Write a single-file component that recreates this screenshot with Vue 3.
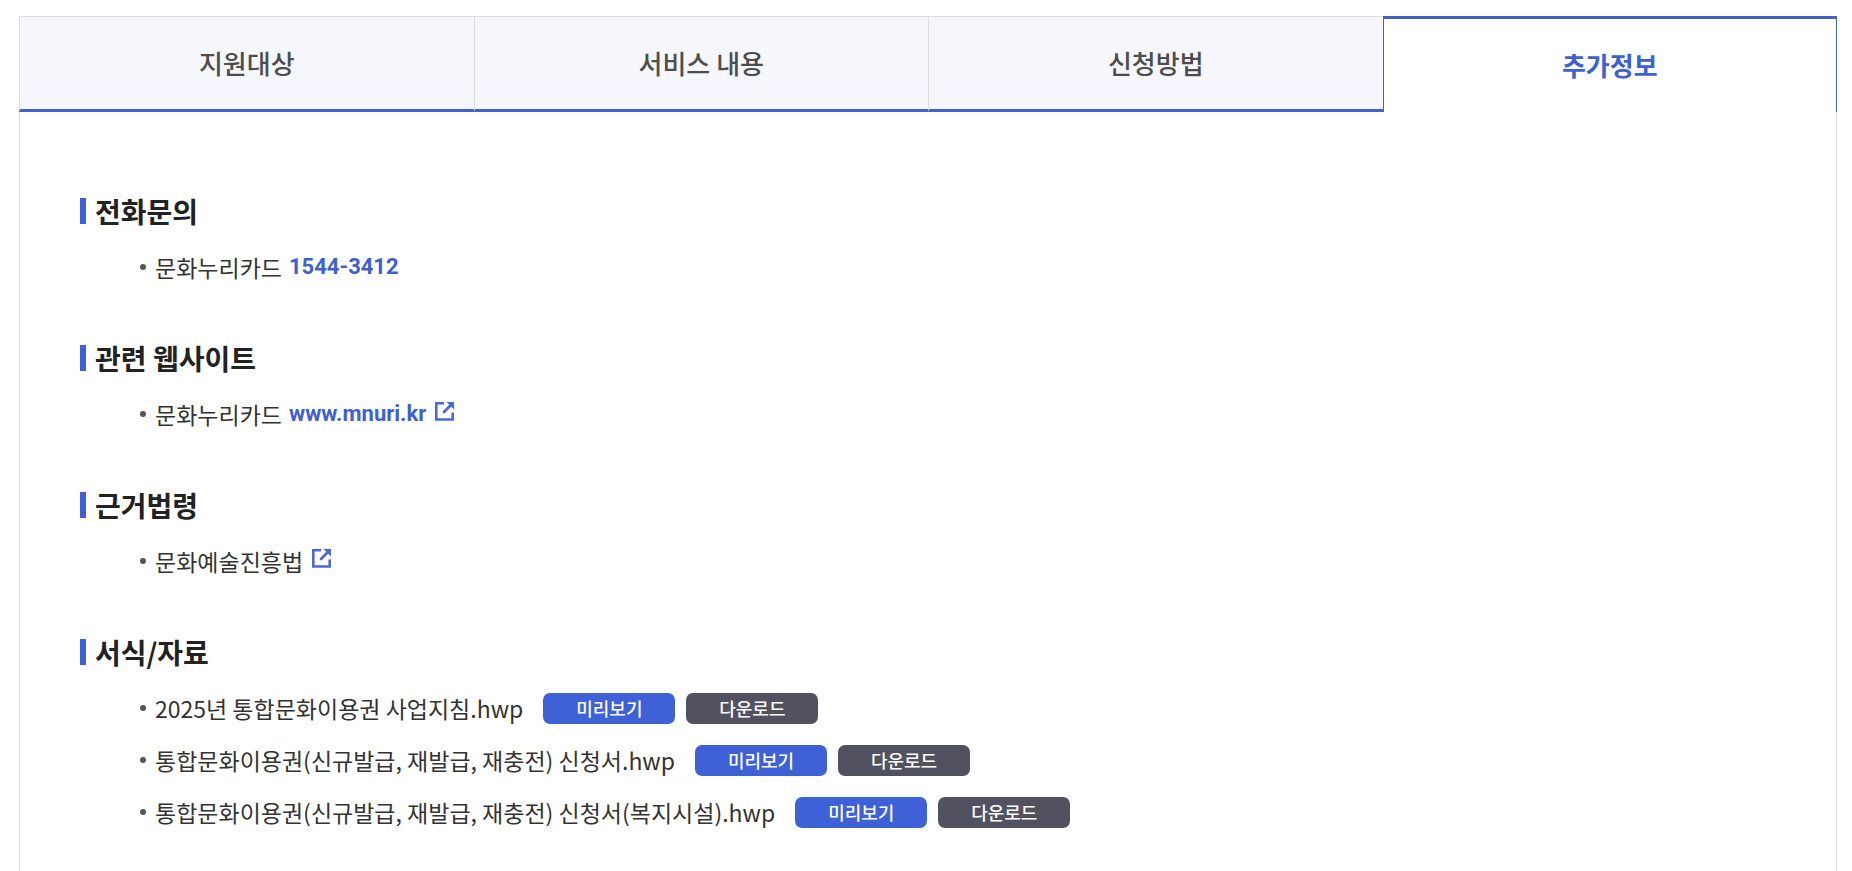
<script setup>
import { ref } from 'vue'

const tabs = ['지원대상', '서비스 내용', '신청방법', '추가정보']
const current = ref(3)

const files = [
  '2025년 통합문화이용권 사업지침.hwp',
  '통합문화이용권(신규발급, 재발급, 재충전) 신청서.hwp',
  '통합문화이용권(신규발급, 재발급, 재충전) 신청서(복지시설).hwp'
]
</script>

<template>
  <main class="page">
    <div class="tabs" role="tablist">
      <button
        v-for="(tab, i) in tabs"
        :key="tab"
        type="button"
        role="tab"
        class="tab"
        :class="{ active: i === current }"
        :aria-selected="i === current"
        @click="current = i"
      >{{ tab }}</button>
    </div>

    <div class="panel" role="tabpanel">
      <section class="block">
        <h2 class="title">전화문의</h2>
        <ul class="list">
          <li class="item">
            <span>문화누리카드</span>
            <a class="link" href="tel:1544-3412">1544-3412</a>
          </li>
        </ul>
      </section>

      <section class="block">
        <h2 class="title">관련 웹사이트</h2>
        <ul class="list">
          <li class="item">
            <span>문화누리카드</span>
            <a class="link" href="#website">
              www.mnuri.kr
              <svg class="icon" viewBox="0 0 19 19" aria-hidden="true">
                <path d="M9 1.200H1.300V17.500H17.700V10.500" fill="none" stroke="currentColor" stroke-width="2.600" />
                <path d="M9 10L15.500 3.500" fill="none" stroke="currentColor" stroke-width="2.800" stroke-linecap="round" />
                <path d="M11.500 0H19V7.500Z" fill="currentColor" />
              </svg>
            </a>
          </li>
        </ul>
      </section>

      <section class="block">
        <h2 class="title">근거법령</h2>
        <ul class="list">
          <li class="item">
            <a class="law" href="#law">
              문화예술진흥법
              <svg class="icon" viewBox="0 0 19 19" aria-hidden="true">
                <path d="M9 1.200H1.300V17.500H17.700V10.500" fill="none" stroke="currentColor" stroke-width="2.600" />
                <path d="M9 10L15.500 3.500" fill="none" stroke="currentColor" stroke-width="2.800" stroke-linecap="round" />
                <path d="M11.500 0H19V7.500Z" fill="currentColor" />
              </svg>
            </a>
          </li>
        </ul>
      </section>

      <section class="block">
        <h2 class="title">서식/자료</h2>
        <ul class="list">
          <li v-for="file in files" :key="file" class="item">
            <span>{{ file }}</span>
            <span class="actions">
              <button type="button" class="btn preview">미리보기</button>
              <button type="button" class="btn download">다운로드</button>
            </span>
          </li>
        </ul>
      </section>
    </div>
  </main>
</template>

<style>
body {
  margin: 0;
  background: #fff;
}
</style>

<style scoped>
.page {
  box-sizing: border-box;
  display: flex;
  flex-direction: column;
  min-height: 100vh;
  padding: 16px 15px 0 19px;
  color: #333;
  font-family: "Noto Sans CJK KR", "Noto Sans", sans-serif;
  font-size: 23px;
}

.tabs {
  display: grid;
  grid-template-columns: repeat(4, 1fr);
}

.tab {
  box-sizing: border-box;
  height: 96px;
  padding: 0 0 2px;
  border: 0 solid #dcdde5;
  border-width: 1px 0 3px 1px;
  border-bottom-color: #4163c9;
  background: #f5f7fc;
  color: #4d4d4d;
  font-family: inherit;
  font-size: 26px;
  font-weight: 500;
  cursor: pointer;
}

.tab.active {
  border-width: 3px 1px 0;
  border-color: #4163c9;
  background: #fff;
  color: #3d60d3;
  font-weight: 700;
}

.panel {
  flex: 1;
  padding: 79px 60px 32px;
  border: solid #dddde3;
  border-width: 0 1px;
}

.block + .block {
  margin-top: 45px;
}

.title {
  display: flex;
  align-items: center;
  gap: 9px;
  margin: 0;
  color: #222;
  font-size: 28px;
  font-weight: 700;
  line-height: 40px;
}

.title::before {
  content: "";
  width: 6px;
  height: 26px;
  background: #3d60d7;
}

.list {
  margin: 10px 0 0;
  padding: 0 0 0 60px;
  list-style: none;
}

.item {
  display: flex;
  align-items: center;
  min-height: 52px;
  line-height: 32px;
}

.item::before {
  content: "";
  width: 6px;
  height: 6px;
  margin-right: 9px;
  border-radius: 50%;
  background: #555;
}

.link,
.law {
  display: flex;
  align-items: center;
  color: inherit;
  text-decoration: none;
}

.link {
  margin-left: 7px;
  color: #3d60d3;
  font-family: Roboto, "Noto Sans CJK KR", sans-serif;
  font-weight: 700;
  font-size: 22px;
}

.icon {
  width: 19px;
  height: 19px;
  margin: 0 0 5px 9px;
  color: #4a69d6;
}

.actions {
  display: flex;
  gap: 11px;
  margin-left: 20px;
}

.btn {
  width: 132px;
  height: 31px;
  padding: 0;
  border: 0;
  border-radius: 7px;
  color: #fff;
  font-family: inherit;
  font-size: 18px;
  font-weight: 500;
  line-height: 31px;
  cursor: pointer;
}

.preview {
  background: #3e61d8;
}

.download {
  background: #51515f;
}
</style>
